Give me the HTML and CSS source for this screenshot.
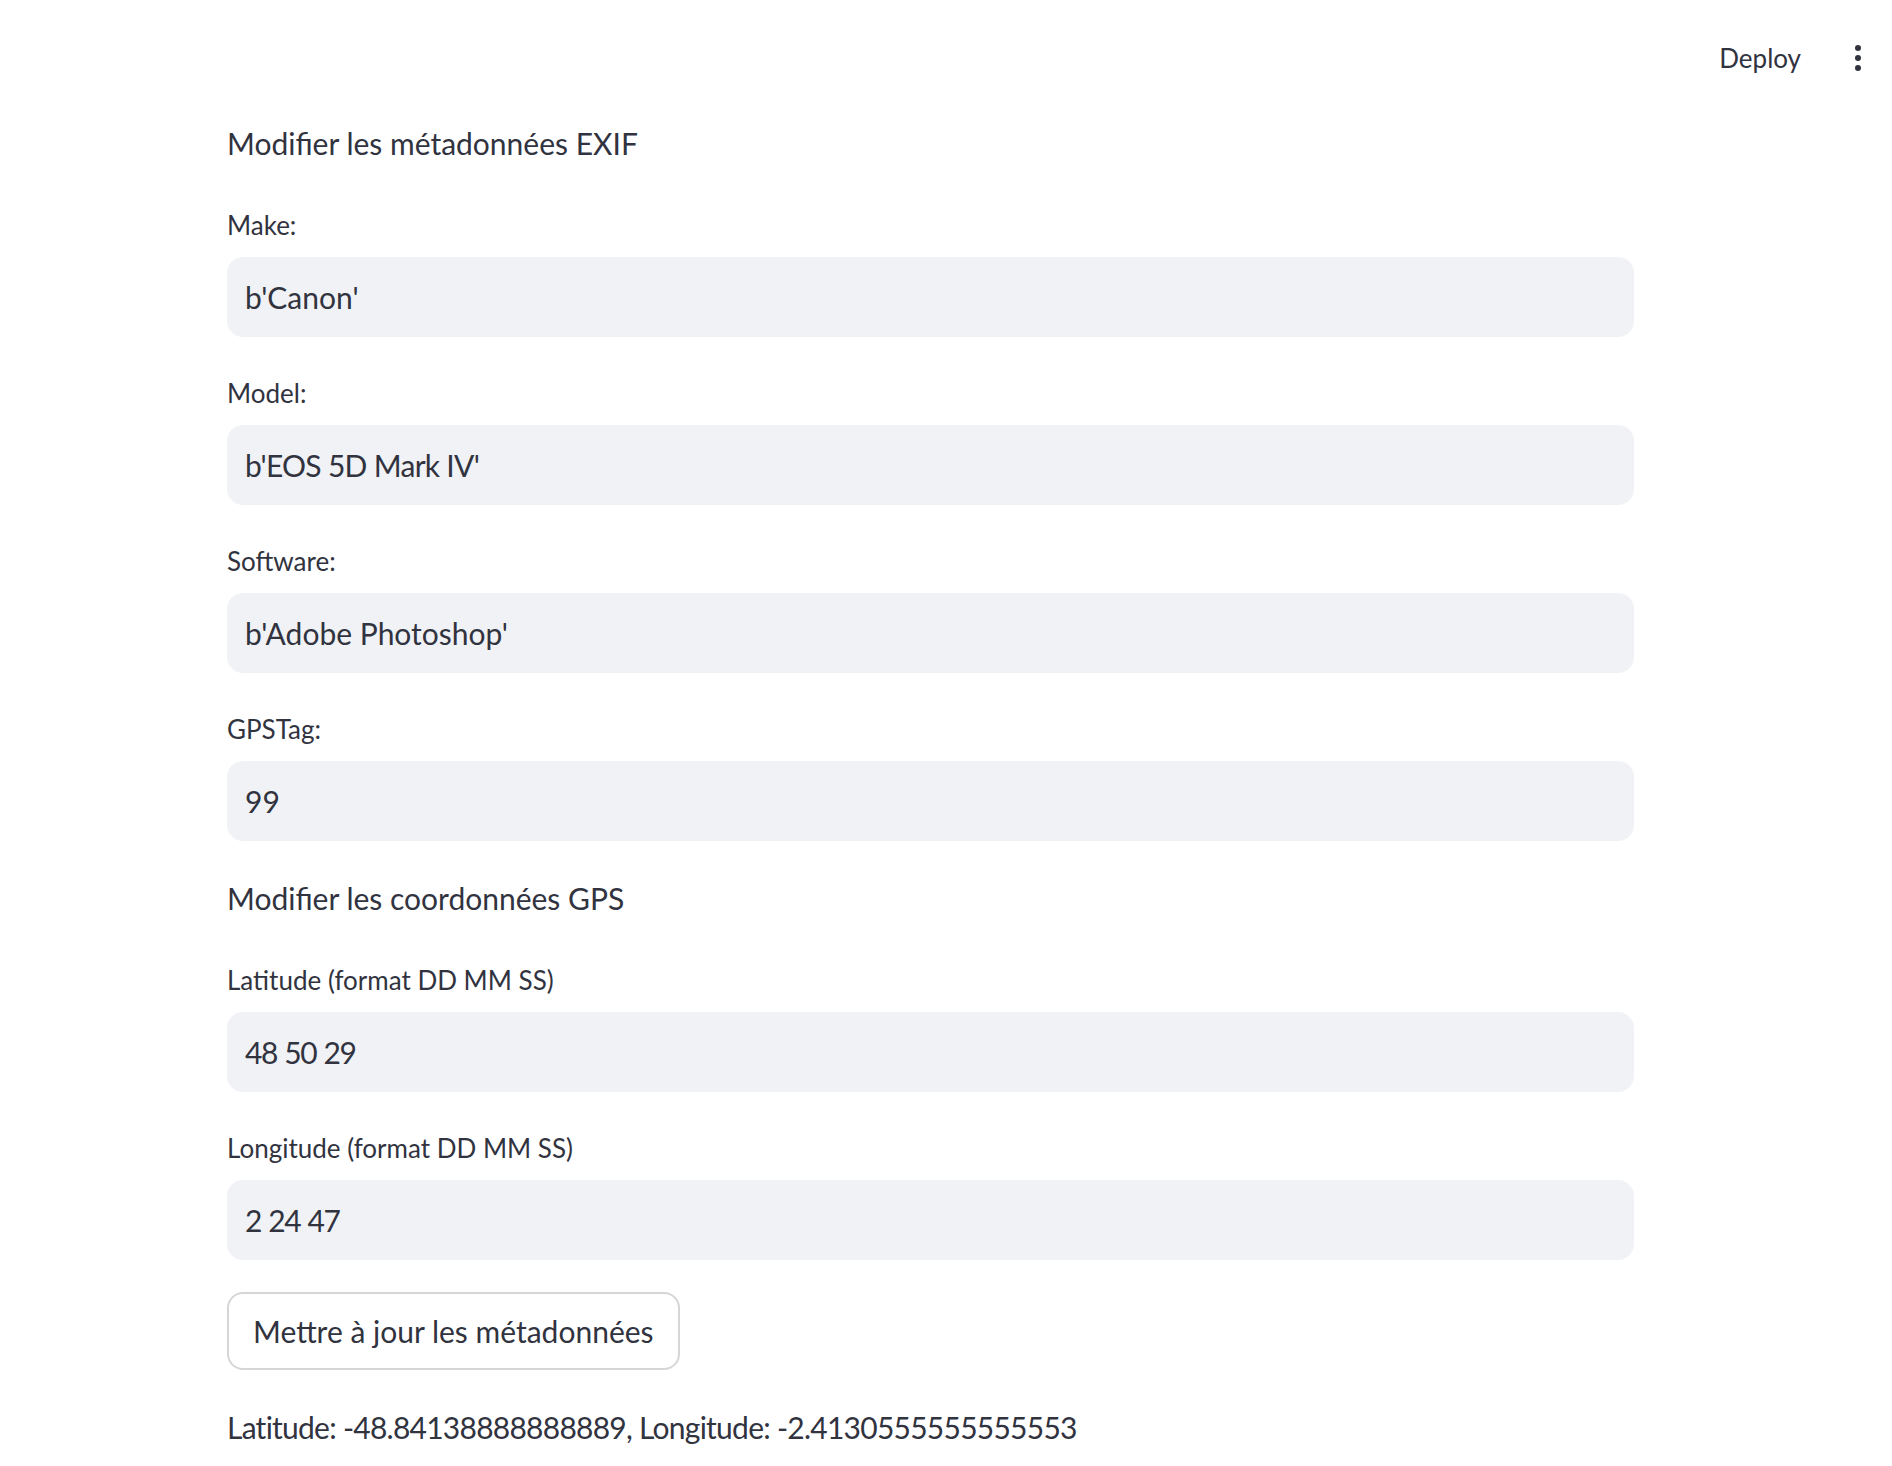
FILE: index.html
```html
<!DOCTYPE html>
<html lang="fr">
<head>
<meta charset="utf-8">
<title>EXIF</title>
<link rel="stylesheet" href="styles.css">
</head>
<body>
<header class="topbar">
  <span class="deploy">Deploy</span>
  <span class="kebab" aria-label="menu">
    <svg width="8" height="30" viewBox="0 0 8 30"><circle cx="4" cy="5" r="3" fill="#31333F"/><circle cx="4" cy="15" r="3" fill="#31333F"/><circle cx="4" cy="25" r="3" fill="#31333F"/></svg>
  </span>
</header>
<main class="content">
  <p class="text">Modifier les métadonnées EXIF</p>
  <div class="field">
    <label class="label">Make:</label>
    <div class="input">b'Canon'</div>
  </div>
  <div class="field">
    <label class="label">Model:</label>
    <div class="input input-mixed">b'EOS 5D Mark IV'</div>
  </div>
  <div class="field">
    <label class="label">Software:</label>
    <div class="input">b'Adobe Photoshop'</div>
  </div>
  <div class="field">
    <label class="label">GPSTag:</label>
    <div class="input">99</div>
  </div>
  <p class="text">Modifier les coordonnées GPS</p>
  <div class="field">
    <label class="label">Latitude (format DD MM SS)</label>
    <div class="input input-num">48 50 29</div>
  </div>
  <div class="field">
    <label class="label">Longitude (format DD MM SS)</label>
    <div class="input input-num">2 24 47</div>
  </div>
  <div class="btnrow"><button class="button">Mettre à jour les métadonnées</button></div>
  <p class="text result">Latitude: -48.84138888888889, Longitude: -2.4130555555555553</p>
</main>
</body>
</html>
```
FILE: styles.css
```css
html, body {
  margin: 0;
  padding: 0;
  background: #ffffff;
}
body {
  font-family: "Lato", "Open Sans", sans-serif;
  color: #31333F;
}
.topbar {
  height: 116px;
  display: flex;
  align-items: center;
  justify-content: flex-end;
  padding-right: 30px;
  gap: 53px;
}
.deploy {
  font-size: 26px;
  line-height: 40px;
}
.kebab {
  display: flex;
  align-items: center;
}
.kebab svg { display: block; }
.content {
  margin: 2px 0 0 227px;
  width: 1407px;
  display: flex;
  flex-direction: column;
  gap: 32px;
  padding-bottom: 20px;
}
.text {
  margin: 0;
  font-size: 30px;
  line-height: 51px;
}
.text.result {
  letter-spacing: -0.75px;
}
.field {
  display: flex;
  flex-direction: column;
}
.label {
  font-size: 26px;
  line-height: 48px;
  height: 48px;
  margin-bottom: 8px;
}
.input {
  height: 80px;
  box-sizing: border-box;
  background: #F0F2F6;
  border-radius: 16px;
  padding: 0 18px;
  display: flex;
  align-items: center;
  font-size: 30px;
}
.input-mixed {
  letter-spacing: -0.7px;
}
.input-num {
  letter-spacing: -1.4px;
  word-spacing: 1px;
}
.btnrow { display: flex; }
.button {
  font-family: inherit;
  color: #31333F;
  background: #ffffff;
  border: 2px solid #d6d6d9;
  border-radius: 16px;
  height: 78px;
  padding: 0 24px;
  font-size: 30px;
  cursor: pointer;
}
```
